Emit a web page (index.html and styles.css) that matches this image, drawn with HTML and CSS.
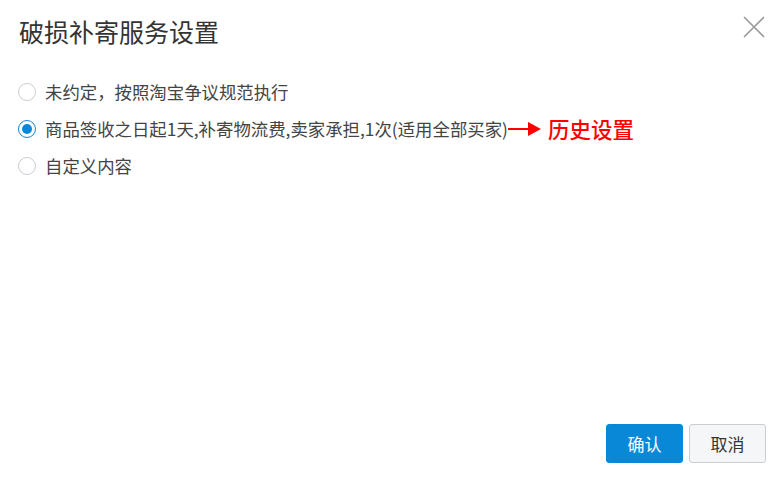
FILE: index.html
```html
<!DOCTYPE html>
<html lang="zh-CN">
<head>
<meta charset="utf-8">
<title>破损补寄服务设置</title>
<link rel="stylesheet" href="styles.css">
</head>
<body>
<div class="dialog">
  <div class="header">
    <h1 class="title">破损补寄服务设置</h1>
    <button class="close" aria-label="关闭">
      <svg width="22" height="22" viewBox="0 0 22 22"><path d="M1 1 L21 21 M21 1 L1 21" stroke="#9a9a9a" stroke-width="1.6" fill="none"/></svg>
    </button>
  </div>
  <div class="options">
    <label class="option"><span class="radio"></span><span class="label">未约定，按照淘宝争议规范执行</span></label>
    <label class="option"><span class="radio checked"></span><span class="label">商品签收之日起1天,补寄物流费,卖家承担,1次(适用全部买家)</span><span class="note"><svg class="arrow" width="34" height="14" viewBox="0 0 34 14"><path d="M0 7 H22" stroke="#f00" stroke-width="2"/><path d="M20 0 L33 7 L20 14 Z" fill="#f00"/></svg><span class="history">历史设置</span></span></label>
    <label class="option"><span class="radio"></span><span class="label">自定义内容</span></label>
  </div>
  <div class="footer">
    <button class="btn primary">确认</button>
    <button class="btn">取消</button>
  </div>
</div>
</body>
</html>
```
FILE: styles.css
```css
* { box-sizing: border-box; }
html, body { margin: 0; padding: 0; background: #fff; }
body {
  font-family: "Noto Sans CJK SC", "Noto Sans", sans-serif;
  color: #333;
}
.dialog {
  width: 775px;
  height: 479px;
  display: flex;
  flex-direction: column;
}
.header {
  display: flex;
  justify-content: space-between;
  align-items: flex-start;
  padding: 13px 9px 0 19px;
}
.title {
  margin: 0;
  font-size: 25px;
  font-weight: normal;
  line-height: 36px;
  color: #333;
}
.close {
  border: 0;
  background: none;
  padding: 0;
  margin-top: 3px;
  margin-right: 1px;
  width: 22px;
  height: 22px;
  cursor: pointer;
}
.close svg { display: block; }
.options {
  display: flex;
  flex-direction: column;
  padding: 24px 0 0 18px;
}
.option {
  display: flex;
  align-items: center;
  height: 37px;
  font-size: 17.4px;
  color: #444;
}
.radio {
  width: 18px;
  height: 18px;
  border: 1px solid #c9ccd3;
  border-radius: 50%;
  margin-right: 9px;
  flex: none;
  position: relative;
}
.radio.checked {
  border-color: #0a88d8;
}
.radio.checked::after {
  content: "";
  position: absolute;
  left: 3px;
  top: 3px;
  width: 10px;
  height: 10px;
  border-radius: 50%;
  background: #0a88d8;
}
.note {
  display: flex;
  align-items: center;
  margin-left: 0;
}
.arrow { display: block; margin-right: 6px; }
.history {
  color: #f00;
  font-size: 21.5px;
  font-weight: 500;
}
.footer {
  margin-top: auto;
  display: flex;
  justify-content: flex-end;
  gap: 6px;
  padding: 0 9px 16px 0;
}
.btn {
  width: 77px;
  height: 39px;
  border-radius: 3px;
  border: 1px solid #c9cdd4;
  background: #f5f6f8;
  color: #333;
  font-family: "Noto Sans CJK SC", sans-serif;
  font-size: 17px;
  padding: 0;
}
.btn.primary {
  background: #0a88d8;
  border-color: #0a88d8;
  color: #fff;
}
```
